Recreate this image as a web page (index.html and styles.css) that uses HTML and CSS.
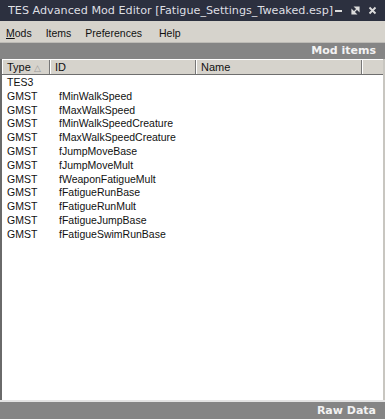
FILE: index.html
```html
<!DOCTYPE html>
<html>
<head>
<meta charset="utf-8">
<link rel="stylesheet" href="styles.css">
</head>
<body>
<div class="window">
  <div class="titlebar">
    <span class="title">TES Advanced Mod Editor [Fatigue_Settings_Tweaked.esp]</span>
    <div class="controls">
      <svg width="9" height="9" viewBox="0 0 9 9"><rect x="1" y="4" width="7" height="2" fill="#dcdcdc"/></svg>
      <svg width="9" height="9" viewBox="0 0 9 9"><path d="M4 1h4v4z M1 4v4h4z M2.5 6.5l4-4" fill="#dcdcdc" stroke="#dcdcdc" stroke-width="1.2"/></svg>
      <svg width="9" height="9" viewBox="0 0 9 9"><path d="M1.5 1.5l6 6M7.5 1.5l-6 6" stroke="#dcdcdc" stroke-width="1.8"/></svg>
    </div>
  </div>
  <div class="menubar">
    <span class="menu"><u>M</u>ods</span>
    <span class="menu">Items</span>
    <span class="menu">Preferences</span>
    <span class="menu">Help</span>
  </div>
  <div class="section-bar">Mod items</div>
  <div class="list">
    <div class="list-head">
      <div class="col c-type">Type <span class="sort">△</span></div>
      <div class="col c-id">ID</div>
      <div class="col c-name">Name</div>
      <div class="col c-rest"></div>
    </div>
    <div class="rows">
      <div class="row"><span class="c-type">TES3</span><span class="c-id"></span></div>
      <div class="row"><span class="c-type">GMST</span><span class="c-id">fMinWalkSpeed</span></div>
      <div class="row"><span class="c-type">GMST</span><span class="c-id">fMaxWalkSpeed</span></div>
      <div class="row"><span class="c-type">GMST</span><span class="c-id">fMinWalkSpeedCreature</span></div>
      <div class="row"><span class="c-type">GMST</span><span class="c-id">fMaxWalkSpeedCreature</span></div>
      <div class="row"><span class="c-type">GMST</span><span class="c-id">fJumpMoveBase</span></div>
      <div class="row"><span class="c-type">GMST</span><span class="c-id">fJumpMoveMult</span></div>
      <div class="row"><span class="c-type">GMST</span><span class="c-id">fWeaponFatigueMult</span></div>
      <div class="row"><span class="c-type">GMST</span><span class="c-id">fFatigueRunBase</span></div>
      <div class="row"><span class="c-type">GMST</span><span class="c-id">fFatigueRunMult</span></div>
      <div class="row"><span class="c-type">GMST</span><span class="c-id">fFatigueJumpBase</span></div>
      <div class="row"><span class="c-type">GMST</span><span class="c-id">fFatigueSwimRunBase</span></div>
    </div>
  </div>
  <div class="section-bar bottom">Raw Data</div>
</div>
</body>
</html>
```
FILE: styles.css
```css
html, body {
  margin: 0;
  padding: 0;
  background: #d6d3cc;
}
.window {
  width: 385px;
  height: 419px;
  display: flex;
  flex-direction: column;
  overflow: hidden;
}
.titlebar {
  height: 21px;
  background: #2c303f;
  display: flex;
  align-items: center;
  padding: 0 8px 0 8px;
  color: #dedfe3;
  font-family: "DejaVu Sans", sans-serif;
  font-size: 11.2px;
  flex-shrink: 0;
}
.title {
  flex: 1;
  min-width: 0;
  white-space: nowrap;
  overflow: hidden;
}
.controls {
  display: flex;
  gap: 8px;
  align-items: center;
  flex-shrink: 0;
}
.controls svg { display: block; }
.menubar {
  height: 18px;
  padding-top: 3px;
  background: #d6d3cc;
  display: flex;
  align-items: center;
  font-family: "Liberation Sans", sans-serif;
  font-size: 10.5px;
  color: #111;
  padding-left: 6px;
  flex-shrink: 0;
}
.menu { margin-right: 14px; }
.menu:nth-child(3) { margin-right: 17px; }
.menu u { text-decoration: underline; }
.section-bar {
  height: 16px;
  background: #858585;
  color: #f2f2f2;
  font-family: "DejaVu Sans", sans-serif;
  font-weight: bold;
  font-size: 11px;
  text-align: right;
  padding-right: 9px;
  line-height: 16px;
  flex-shrink: 0;
  border-top: 1px solid #bdbbb6;
}
.section-bar.bottom {
  height: 17px;
  line-height: 17px;
  border-top: 2px solid #e4e4e4;
}
.list {
  flex: 1;
  background: #fff;
  border-left: 2px solid #6a6a6a;
  border-right: 2px solid #c8c6c0;
  display: flex;
  flex-direction: column;
  font-family: "Liberation Sans", sans-serif;
  font-size: 10.5px;
  color: #111;
}
.list-head {
  display: flex;
  height: 14px;
  background: #d6d3cc;
  border-bottom: 1px solid #6e6e6e;
  border-top: 1px solid #ffffff;
  font-size: 11px;
}
.col {
  line-height: 14px;
  padding-left: 4px;
  box-sizing: border-box;
  border-right: 1px solid #777;
  border-left: 1px solid #fff;
}
.list-head .c-type { width: 48px; }
.list-head .c-id { width: 146px; }
.list-head .c-name { width: 166px; }
.list-head .c-rest { flex: 1; border-right: none; }
.sort { color: #999; font-size: 9px; }
.rows {
  padding-top: 1px;
}
.row {
  display: flex;
  height: 13.8px;
  line-height: 13.8px;
}
.row .c-type {
  width: 50px;
  padding-left: 5px;
  box-sizing: border-box;
}
.row .c-id {
  padding-left: 7px;
}
```
